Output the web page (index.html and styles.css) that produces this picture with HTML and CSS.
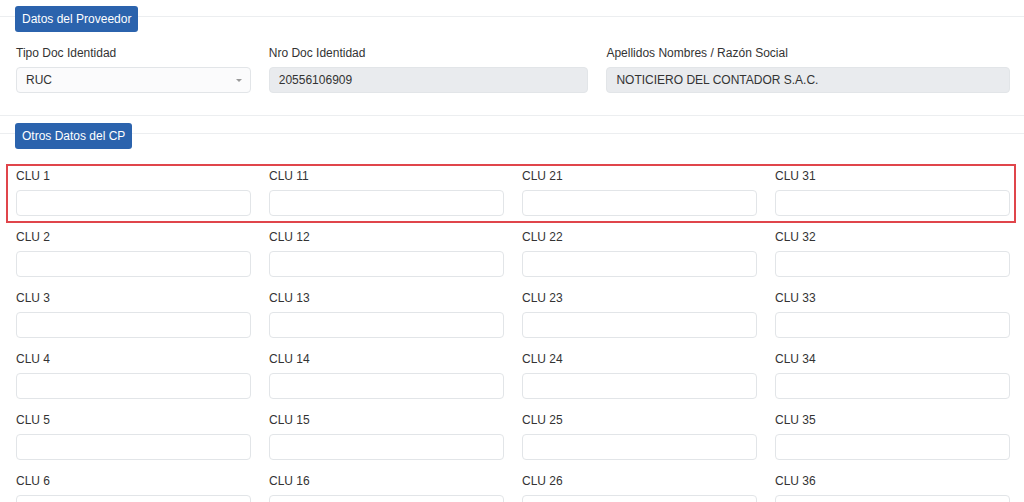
FILE: index.html
```html
<!DOCTYPE html>
<html lang="es">
<head>
  <meta charset="UTF-8" />
  <title>Datos del Proveedor</title>
  <link rel="stylesheet" href="styles.css">
</head>
<body>
  <div class="seccion">
    <div class="cabecera"><span class="etiqueta">Datos del Proveedor</span></div>
    <div class="fila proveedor">
      <div class="campo">
        <label>Tipo Doc Identidad</label>
        <div class="select">RUC<span class="caret"></span></div>
      </div>
      <div class="campo">
        <label>Nro Doc Identidad</label>
        <input type="text" value="20556106909" disabled />
      </div>
      <div class="campo">
        <label>Apellidos Nombres / Razón Social</label>
        <input type="text" value="NOTICIERO DEL CONTADOR S.A.C." disabled />
      </div>
    </div>
  </div>

  <div class="seccion otros">
    <div class="cabecera"><span class="etiqueta">Otros Datos del CP</span></div>
    <div class="resaltado">
      <div class="fila clu">
        <div class="campo"><label>CLU 1</label><input type="text" /></div>
        <div class="campo"><label>CLU 11</label><input type="text" /></div>
        <div class="campo"><label>CLU 21</label><input type="text" /></div>
        <div class="campo"><label>CLU 31</label><input type="text" /></div>
      </div>
    </div>
    <div class="fila clu">
      <div class="campo"><label>CLU 2</label><input type="text" /></div>
      <div class="campo"><label>CLU 12</label><input type="text" /></div>
      <div class="campo"><label>CLU 22</label><input type="text" /></div>
      <div class="campo"><label>CLU 32</label><input type="text" /></div>
    </div>
    <div class="fila clu">
      <div class="campo"><label>CLU 3</label><input type="text" /></div>
      <div class="campo"><label>CLU 13</label><input type="text" /></div>
      <div class="campo"><label>CLU 23</label><input type="text" /></div>
      <div class="campo"><label>CLU 33</label><input type="text" /></div>
    </div>
    <div class="fila clu">
      <div class="campo"><label>CLU 4</label><input type="text" /></div>
      <div class="campo"><label>CLU 14</label><input type="text" /></div>
      <div class="campo"><label>CLU 24</label><input type="text" /></div>
      <div class="campo"><label>CLU 34</label><input type="text" /></div>
    </div>
    <div class="fila clu">
      <div class="campo"><label>CLU 5</label><input type="text" /></div>
      <div class="campo"><label>CLU 15</label><input type="text" /></div>
      <div class="campo"><label>CLU 25</label><input type="text" /></div>
      <div class="campo"><label>CLU 35</label><input type="text" /></div>
    </div>
    <div class="fila clu">
      <div class="campo"><label>CLU 6</label><input type="text" /></div>
      <div class="campo"><label>CLU 16</label><input type="text" /></div>
      <div class="campo"><label>CLU 26</label><input type="text" /></div>
      <div class="campo"><label>CLU 36</label><input type="text" /></div>
    </div>
  </div>
</body>
</html>
```
FILE: styles.css
```css
body { font-family: "Liberation Sans", Arial, sans-serif; font-size: 12px; color: #333; background: #fff; margin: 0; padding: 0; }
.seccion { padding: 6px 14px 0 16px; }
.seccion.otros { border-top: 1px solid #eceef0; margin-top: 22px; padding-top: 7px; }
.cabecera {
  margin: 0 -14px 0 -16px; padding-left: 15px; height: 26px;
  background: linear-gradient(#eceef0, #eceef0) no-repeat 0 10px / 100% 1px;
}
.etiqueta {
  display: inline-block; background-color: #2b63ad; color: #fff;
  height: 26px; line-height: 26px; padding: 0 7px; border-radius: 3px;
}
.fila { display: grid; grid-template-columns: repeat(4, 1fr); column-gap: 18px; }
.fila.proveedor { grid-template-columns: 235fr 320fr 404fr; margin-top: 14px; }
.fila.clu { margin-top: 14px; }
.campo label { display: block; line-height: 14px; margin-bottom: 7px; }
input, .select {
  display: block; box-sizing: border-box; width: 100%; height: 26px; margin: 0;
  padding: 0 9px; border: 1px solid #e2e5e8; border-radius: 4px;
  font: inherit; color: #333; background: #fff;
}
input:disabled { background: #e9ebee; color: #333; }
.select { position: relative; line-height: 24px; background: #fbfbfc; }
.caret {
  position: absolute; right: 8px; top: 11px;
  border-left: 3px solid transparent; border-right: 3px solid transparent; border-top: 3px solid #9a9a9a;
}
.resaltado {
  margin: 15px -6px -7px -10px; padding: 3px 4px 5px 8px;
  border: 2px solid #e0454b;
}
.resaltado .fila.clu { margin-top: 0; }
```
